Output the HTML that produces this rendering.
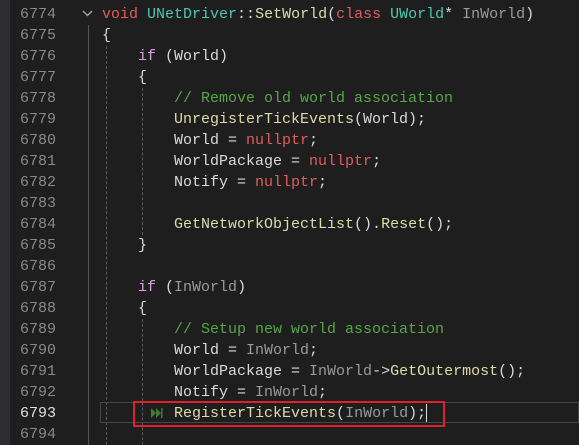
<!DOCTYPE html>
<html><head><style>
html,body{margin:0;padding:0;background:#1e1e1e;width:579px;height:445px;overflow:hidden;position:relative}
.strip{position:absolute;left:0;top:0;width:10px;height:445px;background:#2d2d30}
.l{position:absolute;left:0;height:21px;line-height:21px;font-family:"Liberation Mono",monospace;font-size:15px;white-space:pre;color:#dadada}
.n{position:absolute;left:14px;width:42px;text-align:right;color:#2b91af;color:#8a8a8a}
.c{position:absolute;left:102px}
.k{color:#d8a0df}.r{color:#e05d5d}.t{color:#4ec9b0}.f{color:#dcdcaa}.p{color:#9a9a9a}.g{color:#57a64a}.v{color:#dadada}
.vl{position:absolute;width:0}
</style></head><body>
<div class="strip"></div>
<div class="vl" style="left:88px;top:25px;height:420px;border-left:1px solid #555"></div>
<div class="vl" style="left:106px;top:46px;height:399px;border-left:1px dashed #5a5a5a"></div>
<div class="vl" style="left:142px;top:88px;height:147px;border-left:1px dashed #5a5a5a"></div>
<div class="vl" style="left:142px;top:319px;height:126px;border-left:1px dashed #5a5a5a"></div>
<svg style="position:absolute;left:82px;top:10px" width="12" height="8"><path d="M1 1 L5.5 5.5 L10 1" stroke="#aaa" fill="none" stroke-width="1.3"/></svg>
<div style="position:absolute;left:100px;top:402px;width:479px;height:21px;border:1px solid #464646;box-sizing:border-box"></div>
<div style="position:absolute;left:133px;top:401px;width:312px;height:26px;border:2px solid #e0202a;box-sizing:border-box"></div>
<svg style="position:absolute;left:151px;top:408px" width="12" height="10"><path d="M0 0 L5 5 L0 10Z M5 0 L10 5 L5 10Z" fill="#3f7a3a"/><rect x="10" y="0" width="1.5" height="10" fill="#3f7a3a"/></svg>
<div style="position:absolute;left:426px;top:404px;width:1px;height:18px;background:#ddd"></div>

<div class="l" style="top:4px"><span class="n">6774</span><span class="c"><span class="r">void</span> <span class="t">UNetDriver</span>::<span class="f">SetWorld</span>(<span class="r">class</span> <span class="t">UWorld</span>* <span class="p">InWorld</span>)</span></div>
<div class="l" style="top:25px"><span class="n">6775</span><span class="c">{</span></div>
<div class="l" style="top:46px"><span class="n">6776</span><span class="c">    <span class="k">if</span> (World)</span></div>
<div class="l" style="top:67px"><span class="n">6777</span><span class="c">    {</span></div>
<div class="l" style="top:88px"><span class="n">6778</span><span class="c">        <span class="g">// Remove old world association</span></span></div>
<div class="l" style="top:109px"><span class="n">6779</span><span class="c">        <span class="f">UnregisterTickEvents</span>(World);</span></div>
<div class="l" style="top:130px"><span class="n">6780</span><span class="c">        World = <span class="r">nullptr</span>;</span></div>
<div class="l" style="top:151px"><span class="n">6781</span><span class="c">        WorldPackage = <span class="r">nullptr</span>;</span></div>
<div class="l" style="top:172px"><span class="n">6782</span><span class="c">        Notify = <span class="r">nullptr</span>;</span></div>
<div class="l" style="top:193px"><span class="n">6783</span></div>
<div class="l" style="top:214px"><span class="n">6784</span><span class="c">        <span class="f">GetNetworkObjectList</span>().<span class="f">Reset</span>();</span></div>
<div class="l" style="top:235px"><span class="n">6785</span><span class="c">    }</span></div>
<div class="l" style="top:256px"><span class="n">6786</span></div>
<div class="l" style="top:277px"><span class="n">6787</span><span class="c">    <span class="k">if</span> (<span class="p">InWorld</span>)</span></div>
<div class="l" style="top:298px"><span class="n">6788</span><span class="c">    {</span></div>
<div class="l" style="top:319px"><span class="n">6789</span><span class="c">        <span class="g">// Setup new world association</span></span></div>
<div class="l" style="top:340px"><span class="n">6790</span><span class="c">        World = <span class="p">InWorld</span>;</span></div>
<div class="l" style="top:361px"><span class="n">6791</span><span class="c">        WorldPackage = <span class="p">InWorld</span>-&gt;<span class="f">GetOutermost</span>();</span></div>
<div class="l" style="top:382px"><span class="n">6792</span><span class="c">        Notify = <span class="p">InWorld</span>;</span></div>
<div class="l" style="top:403px"><span class="n" style="color:#e0e0e0">6793</span><span class="c">        <span class="f">RegisterTickEvents</span>(<span class="p">InWorld</span>);</span></div>
<div class="l" style="top:424px"><span class="n">6794</span></div>
</body></html>
